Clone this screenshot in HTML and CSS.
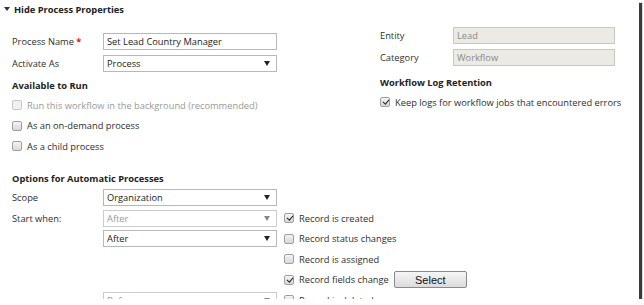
FILE: index.html
```
<!DOCTYPE html>
<html lang="en">
<head>
    <meta charset="UTF-8">
    <title>Process Properties</title>
    <link rel="stylesheet" href="styles.css">
</head>
<body>
    <div class="window">
        <div class="section-head"><span class="caret"></span>Hide Process Properties</div>
        <div class="top">
            <div class="col-left">
                <div class="field">
                    <span class="label">Process Name <span class="req">*</span></span>
                    <div class="input">Set Lead Country Manager</div>
                </div>
                <div class="field">
                    <span class="label">Activate As</span>
                    <div class="select">Process<span class="arrow"></span></div>
                </div>
                <div class="group-title">Available to Run</div>
                <div class="check disabled"><span class="box"></span>Run this workflow in the background (recommended)</div>
                <div class="check"><span class="box"></span>As an on-demand process</div>
                <div class="check"><span class="box"></span>As a child process</div>
            </div>
            <div class="col-right">
                <div class="field">
                    <span class="label">Entity</span>
                    <div class="input readonly">Lead</div>
                </div>
                <div class="field">
                    <span class="label">Category</span>
                    <div class="input readonly">Workflow</div>
                </div>
                <div class="group-title">Workflow Log Retention</div>
                <div class="check"><span class="box checked"></span>Keep logs for workflow jobs that encountered errors</div>
            </div>
        </div>

        <div class="group-title options-title">Options for Automatic Processes</div>
        <div class="auto-grid">
            <span class="label">Scope</span>
            <div class="select">Organization<span class="arrow"></span></div>
            <span></span>

            <span class="label">Start when:</span>
            <div class="select disabled">After<span class="arrow"></span></div>
            <div class="check"><span class="box checked"></span>Record is created</div>

            <span></span>
            <div class="select">After<span class="arrow"></span></div>
            <div class="check"><span class="box"></span>Record status changes</div>

            <span></span>
            <span></span>
            <div class="check"><span class="box"></span>Record is assigned</div>

            <span></span>
            <span></span>
            <div class="check"><span class="box checked"></span>Record fields change <button class="btn">Select</button></div>

            <span></span>
            <div class="select disabled">Before<span class="arrow"></span></div>
            <div class="check"><span class="box"></span>Record is deleted</div>
        </div>
    </div>
</body>
</html>
```

FILE: styles.css
```
html, body {
    margin: 0;
    padding: 0;
    background: #fff;
}
body {
    font-family: 'Open Sans', Arial, sans-serif;
    font-size: 9.3px;
    color: #2e2e2e;
}
.window {
    width: 639px;
    height: 299px;
    overflow: hidden;
    background: #fff;
    box-shadow: 3px 3px 1px #3a3a3a;
    box-sizing: border-box;
}
.section-head {
    display: flex;
    align-items: center;
    height: 18px;
    padding-left: 4px;
    font-weight: 700;
    color: #222;
}
.caret {
    width: 0;
    height: 0;
    border-left: 3px solid transparent;
    border-right: 3px solid transparent;
    border-top: 4px solid #333;
    margin-right: 4px;
}
.top {
    display: flex;
    padding-top: 6px;
}
.col-left {
    width: 368px;
    padding-left: 12px;
    padding-top: 6px;
}
.col-right {
    flex: 1;
}
.field {
    display: flex;
    align-items: center;
    height: 22px;
}
.col-left .label {
    width: 91px;
}
.col-right .label {
    width: 73px;
}
.req {
    color: #e02020;
    font-weight: 700;
}
.input, .select {
    box-sizing: border-box;
    height: 17px;
    border: 1px solid #b8b8b8;
    padding: 0 3px;
    display: flex;
    align-items: center;
    color: #222;
    background: #fff;
}
.col-left .input, .auto-grid .select, .col-left .select {
    width: 174px;
}
.col-right .input {
    width: 162px;
}
.input.readonly {
    background: #ebebe4;
    border-color: #c8c8c0;
    color: #888;
}
.select {
    justify-content: space-between;
}
.arrow {
    width: 0;
    height: 0;
    border-left: 3px solid transparent;
    border-right: 3px solid transparent;
    border-top: 5px solid #222;
    margin-right: 3px;
}
.select.disabled {
    color: #999;
    border-color: #ccc;
}
.select.disabled .arrow {
    border-top-color: #888;
}
.group-title {
    font-weight: 700;
    color: #222;
    height: 20px;
    display: flex;
    align-items: center;
}
.col-left .group-title {
    padding-top: 2px;
    box-sizing: border-box;
    height: 21px;
}
.col-right .group-title {
    margin-top: 4px;
}
.check {
    display: flex;
    align-items: center;
    height: 20.5px;
    white-space: nowrap;
}
.check.disabled {
    color: #999;
}
.auto-grid .check {
    margin-left: 7px;
}
.box {
    box-sizing: border-box;
    width: 10px;
    height: 10px;
    border: 1px solid #a0a0a0;
    border-radius: 2px;
    background: linear-gradient(#f4f4f4, #d8d8d8);
    margin-right: 5px;
    position: relative;
    flex: none;
}
.check.disabled .box {
    border-color: #c8c8c8;
    background: #f0f0f0;
}
.box.checked::after {
    content: '';
    position: absolute;
    left: 2.5px;
    top: 0px;
    width: 2.5px;
    height: 5px;
    border-right: 1.5px solid #222;
    border-bottom: 1.5px solid #222;
    transform: rotate(40deg);
}
.options-title {
    padding-left: 12px;
    margin-top: 13px;
    height: 18px;
}
.auto-grid {
    display: grid;
    grid-template-columns: 91px 174px 1fr;
    grid-auto-rows: 20.5px;
    padding-left: 12px;
    align-items: center;
}
.btn {
    margin-left: 5px;
    width: 73px;
    height: 17px;
    font-family: 'Liberation Sans', Arial, sans-serif;
    font-size: 11px;
    color: #111;
    border: 1px solid #8a8a8a;
    border-radius: 2px;
    background: linear-gradient(#f6f6f6, #dcdcdc);
    padding: 0;
}
```
